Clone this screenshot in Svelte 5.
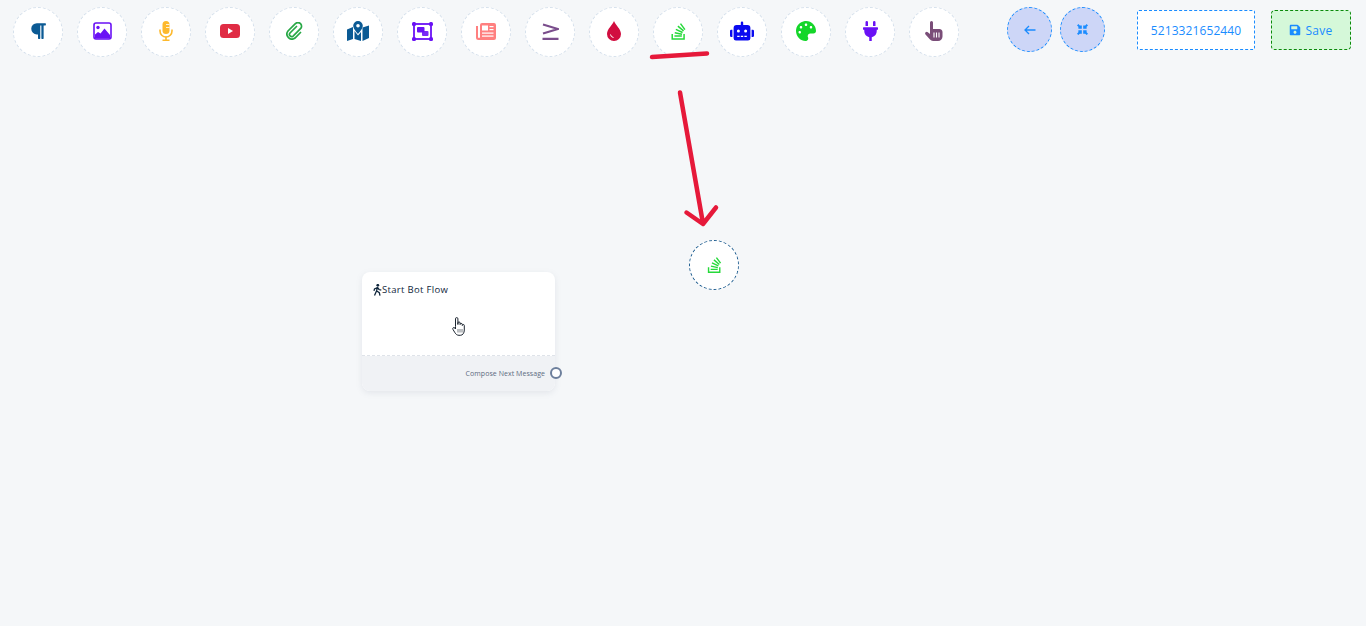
<script>
  const stack = "M290.7 311L95 269.7 86.8 309l195.7 41zm51-87L188.2 95.7l-25.5 30.8 153.5 127.9zm-31.2 39.7L129.2 179l-16.7 36.5L293.7 300zM262 32l-32 24 119.3 160.3 32-24zm20.5 328h-200v39.7h200zm39.7 80H42.7V320h-40v160h359.5V320h-40z";
</script>

<div class="page">
  <header class="toolbar">
    <button class="tool" aria-label="Text">
      <svg width="16" height="18" viewBox="0 0 448 512"><path fill="#0b5a94" d="M448 48v32a16 16 0 0 1-16 16h-48v368a16 16 0 0 1-16 16h-32a16 16 0 0 1-16-16V96h-32v368a16 16 0 0 1-16 16h-32a16 16 0 0 1-16-16V352h-32a160 160 0 0 1 0-320h240a16 16 0 0 1 16 16z"/></svg>
    </button>
    <button class="tool" aria-label="Image">
      <svg width="19" height="18" viewBox="0 0 19 18"><rect x="1" y="1" width="17" height="16" rx="2" fill="#fff" stroke="#6a11f5" stroke-width="1.6"/><circle cx="5" cy="5.500" r="1.700" fill="#6a11f5"/><path fill="#6a11f5" d="M2 16.500v-4l3-2.500 2.500 1.500 4-5 5.500 6.500v3.500z"/></svg>
    </button>
    <button class="tool" aria-label="Audio">
      <svg width="14" height="20" viewBox="0 0 14 20"><rect x="3.500" y="0" width="7" height="13" rx="3.500" fill="#fdb92d"/><path d="M1 8.500v1.500a6 6 0 0 0 12 0V8.500" fill="none" stroke="#fdb92d" stroke-width="1.600"/><path d="M7 15.500V19M3.500 19.300h7" stroke="#fdb92d" stroke-width="1.600"/><path d="M7 3.500h3.500M7 6.500h3.500" stroke="#fff" stroke-width=".8"/></svg>
    </button>
    <button class="tool" aria-label="Video">
      <svg width="20" height="14" viewBox="0 0 20 14"><rect width="20" height="14" rx="3.500" fill="#e02c44"/><path d="M8 4l5 3-5 3z" fill="#fff"/></svg>
    </button>
    <button class="tool" aria-label="Attachment">
      <svg width="17" height="18" viewBox="0 0 17 18"><path d="M10.500 4.500L4 11a2.200 2.200 0 0 0 3.100 3.100l7.400-7.400a3.600 3.600 0 0 0-5.100-5.100L2 9a5 5 0 0 0 7 7l5.500-5.500" fill="none" stroke="#27a845" stroke-width="1.700" stroke-linecap="round"/></svg>
    </button>
    <button class="tool" aria-label="Map">
      <svg width="22" height="20" viewBox="0 0 22 20"><path fill="#0b5a94" d="M0 8.500l6-2.500v12l-6 2zM7.500 10v8l6.500 2v-9l-3 3.500zM15.500 6.500l6.500-2v12.500l-6.500 3z"/><path fill="#0b5a94" fill-rule="evenodd" d="M11 0a4.800 4.800 0 0 1 4.800 4.800C15.800 8 11 13 11 13S6.200 8 6.200 4.800A4.800 4.800 0 0 1 11 0zm0 3a1.800 1.800 0 1 0 0 3.600A1.800 1.800 0 0 0 11 3z"/></svg>
    </button>
    <button class="tool" aria-label="Shape">
      <svg width="21" height="19" viewBox="0 0 21 19"><rect x="2" y="2" width="17" height="15" fill="none" stroke="#6a11f5" stroke-width="1.800"/><g fill="#6a11f5"><rect width="4" height="4" rx="1.500"/><rect x="17" width="4" height="4" rx="1.500"/><rect y="15" width="4" height="4" rx="1.500"/><rect x="17" y="15" width="4" height="4" rx="1.500"/><rect x="5" y="5" width="7.500" height="5.500" rx="1"/><rect x="10" y="9" width="6.500" height="5" rx="1" opacity=".9"/></g></svg>
    </button>
    <button class="tool" aria-label="News">
      <svg width="20" height="17" viewBox="0 0 20 17"><path fill="#ff8080" d="M0 3h2v11a1 1 0 0 0 2 0V2a2 2 0 0 1 2-2h12a2 2 0 0 1 2 2v13a2 2 0 0 1-2 2H2.500A2.500 2.500 0 0 1 0 14.500z"/><g fill="#fff"><rect x="6" y="2.500" width="6" height="5"/><rect x="13.500" y="3" width="4" height="1.200"/><rect x="13.500" y="6" width="4" height="1.200"/><rect x="6" y="9.500" width="11.500" height="1.200"/><rect x="6" y="12.500" width="11.500" height="1.200"/></g></svg>
    </button>
    <button class="tool" aria-label="Greater or equal">
      <svg width="17" height="17" viewBox="0 0 17 17"><path d="M1 1.500l15 4.500-15 4.500M.5 15.800h16" fill="none" stroke="#7a4d8c" stroke-width="2.200"/></svg>
    </button>
    <button class="tool" aria-label="Drop">
      <svg width="14" height="20" viewBox="0 0 14 20"><path fill="#d10d3f" d="M7 0c1 3.500 7 8 7 13a7 7 0 0 1-14 0C0 8 6 3.500 7 0z"/><path d="M3.500 13.500a3.500 3.500 0 0 0 3 3" fill="none" stroke="#fff" stroke-width="1"/></svg>
    </button>
    <button class="tool" aria-label="Stack">
      <svg width="15" height="19" viewBox="0 0 384 512"><path fill="#26d93a" d={stack}/></svg>
    </button>
    <button class="tool" aria-label="Bot">
      <svg width="24" height="20" viewBox="0 0 640 512"><path fill="#0a0af0" d="M32,224H64V416H32A31.96166,31.96166,0,0,1,0,384V256A31.96166,31.96166,0,0,1,32,224Zm512-48V448a64.06328,64.06328,0,0,1-64,64H160a64.06328,64.06328,0,0,1-64-64V176a79.974,79.974,0,0,1,80-80H288V32a32,32,0,0,1,64,0V96H464A79.974,79.974,0,0,1,544,176ZM264,256a40,40,0,1,0-40,40A39.997,39.997,0,0,0,264,256Zm-8,128H192v32h64Zm96,0H288v32h64ZM456,256a40,40,0,1,0-40,40A39.997,39.997,0,0,0,456,256Zm-8,128H384v32h64ZM640,256V384a31.96166,31.96166,0,0,1-32,32H576V224h32A31.96166,31.96166,0,0,1,640,256Z"/></svg>
    </button>
    <button class="tool" aria-label="Palette">
      <svg width="20" height="20" viewBox="0 0 512 512"><path fill="#14d629" d="M204.3 5C104.9 24.4 24.8 104.3 5.2 203.4c-37 187 131.7 326.4 258.8 306.7 41.2-6.4 61.4-54.6 42.5-91.7-23.1-45.4 9.9-98.4 60.9-98.4h79.7c35.8 0 64.8-29.6 64.9-65.3C511.5 97.1 368.1-26.9 204.3 5zM96 320c-17.7 0-32-14.3-32-32s14.3-32 32-32 32 14.3 32 32-14.3 32-32 32zm32-128c-17.7 0-32-14.3-32-32s14.3-32 32-32 32 14.3 32 32-14.3 32-32 32zm128-64c-17.7 0-32-14.3-32-32s14.3-32 32-32 32 14.3 32 32-14.3 32-32 32zm128 64c-17.7 0-32-14.3-32-32s14.3-32 32-32 32 14.3 32 32-14.3 32-32 32z"/></svg>
    </button>
    <button class="tool" aria-label="Plug">
      <svg width="15" height="20" viewBox="0 0 384 512"><path fill="#6a11f5" d="M320,32a32,32,0,0,0-64,0v96h64Zm48,128H16A16,16,0,0,0,0,176v32a16,16,0,0,0,16,16H32v32A160.07,160.07,0,0,0,160,412.8V512h64V412.8A160.07,160.07,0,0,0,352,256V224h16a16,16,0,0,0,16-16V176A16,16,0,0,0,368,160ZM128,32a32,32,0,0,0-64,0v96h64Z"/></svg>
    </button>
    <button class="tool" aria-label="Pointer">
      <svg width="18" height="20" viewBox="0 0 18 20"><path fill="#7a4d78" d="M5 1.500a1.500 1.500 0 0 1 3 0V8h6a3 3 0 0 1 3.500 3v4.500a4.500 4.500 0 0 1-4.500 4.500H8a4 4 0 0 1-3-1.500L.5 13.500a1.600 1.600 0 0 1 2.300-2.200L5 13z"/><path d="M9 11.500v5M11.500 11.500v5M14 11.500v5" stroke="#fff" stroke-width="1.100"/></svg>
    </button>

    <div class="round-group">
      <button class="round" aria-label="Back">
        <svg width="12" height="10" viewBox="0 0 12 10"><path d="M11.500 5H1M5 1L1 5l4 4" fill="none" stroke="#1a8cff" stroke-width="1.300"/></svg>
      </button>
      <button class="round" aria-label="Collapse">
        <svg width="11" height="11" viewBox="0 0 16 16"><path fill="#1a8cff" d="M0 2L2 0L4 2H7V7H2V4zM16 2L14 0L12 2H9V7H14V4zM0 14L2 16L4 14H7V9H2V12zM16 14L14 16L12 14H9V9H14V12z"/></svg>
      </button>
    </div>

    <div class="phone">5213321652440</div>
    <button class="save">
      <svg width="12" height="12" viewBox="0 0 448 512"><path fill="#1a8cff" d="M433.941 129.941l-83.882-83.882A48 48 0 0 0 316.118 32H48C21.49 32 0 53.49 0 80v352c0 26.51 21.49 48 48 48h352c26.51 0 48-21.49 48-48V163.882a48 48 0 0 0-14.059-33.941zM224 416c-35.346 0-64-28.654-64-64 0-35.346 28.654-64 64-64s64 28.654 64 64c0 35.346-28.654 64-64 64zm96-304.52V212c0 6.627-5.373 12-12 12H76c-6.627 0-12-5.373-12-12V108c0-6.627 5.373-12 12-12h228.52c3.183 0 6.235 1.264 8.485 3.515l3.48 3.48A11.996 11.996 0 0 1 320 111.48z"/></svg>
      <span>Save</span>
    </button>
  </header>

  <svg class="marks" width="1366" height="626" aria-hidden="true">
    <path d="M652 57L707 53.500M680 92.500L703 223.500M686.500 212.500L703 224L716 207.500" fill="none" stroke="#e6193a" stroke-width="4.500" stroke-linecap="round" stroke-linejoin="round"/>
  </svg>

  <div class="dropped">
    <svg width="15" height="18" viewBox="0 0 384 512"><path fill="#26d93a" d={stack}/></svg>
  </div>

  <article class="node">
    <div class="node-body">
      <div class="node-title">
        <svg width="9" height="12" viewBox="0 0 9 12"><circle cx="4.800" cy="1.300" r="1.400" fill="#10263c"/><path d="M4.500 3.200L3.500 7 1.500 11.500M3.800 7l2.500 1.700.7 3M4.500 3.500L1.500 5 1 6.800M4.500 3.500L6 5.500l2.300.7" fill="none" stroke="#10263c" stroke-width="1.300"/></svg>
        <span>Start Bot Flow</span>
      </div>
      <svg class="cursor" width="14" height="19" viewBox="0 0 14 19"><path d="M3.500 9.500V1.800a1.200 1.200 0 0 1 2.400 0V7.500V6a1.100 1.100 0 0 1 2.200 0v1.500a1.100 1.100 0 0 1 2.200 0v1a1 1 0 0 1 2 0V13c0 3-1.500 5.300-4 5.300H7c-2 0-3-1-4-2.500L1 12.500c-1-1.700 1-2.700 2-1.300l.5 .8z" fill="#fff" stroke="#1c2530" stroke-width="1"/><path d="M6 12v3.500M8 12v3.500M10 12v3.500" stroke="#1c2530" stroke-width=".6"/></svg>
    </div>
    <div class="node-foot">
      <span>Compose Next Message</span>
      <i class="port"></i>
    </div>
  </article>
</div>

<style>
  :global(body) {
    margin: 0;
    background: #f5f7f9;
    font-family: "Open Sans", "Noto Sans", sans-serif;
  }
  .page {
    position: relative;
    width: 1366px;
    height: 626px;
    overflow: hidden;
    background: #f5f7f9;
  }
  .toolbar {
    display: flex;
    align-items: flex-start;
    gap: 14px;
    padding: 7px 0 0 13px;
  }
  button {
    padding: 0;
    font: inherit;
    cursor: pointer;
  }
  .tool {
    flex: none;
    display: flex;
    align-items: center;
    justify-content: center;
    width: 50px;
    height: 50px;
    box-sizing: border-box;
    border: 1px dashed #d5e0ec;
    border-radius: 50%;
    background: #fff;
    padding-bottom: 2px;
  }
  .round-group {
    display: flex;
    gap: 8px;
    margin-left: 34px;
  }
  .round {
    display: flex;
    align-items: center;
    justify-content: center;
    width: 45px;
    height: 45px;
    box-sizing: border-box;
    border: 1px dashed #1a8cff;
    border-radius: 50%;
    background: #cdd6f7;
  }
  .phone {
    display: flex;
    align-items: center;
    justify-content: center;
    margin: 3px 0 0 18px;
    width: 118px;
    height: 40px;
    box-sizing: border-box;
    border: 1px dashed #1a8cff;
    border-radius: 2px;
    background: #fff;
    color: #1a8cff;
    font-size: 12px;
    letter-spacing: .1px;
  }
  .save {
    display: flex;
    align-items: center;
    justify-content: center;
    gap: 4px;
    margin: 3px 0 0 2px;
    width: 80px;
    height: 40px;
    box-sizing: border-box;
    border: 1px dashed #0a8a0a;
    border-radius: 4px;
    background: #d5f8d9;
    color: #1a8cff;
    font-size: 12px;
    letter-spacing: .3px;
  }
  .marks {
    position: absolute;
    inset: 0;
    pointer-events: none;
  }
  .dropped {
    position: absolute;
    left: 689px;
    top: 240px;
    display: flex;
    align-items: center;
    justify-content: center;
    width: 50px;
    height: 50px;
    box-sizing: border-box;
    border: 1px dashed #1a5a8e;
    border-radius: 50%;
    background: #fff;
  }
  .node {
    position: absolute;
    left: 362px;
    top: 272px;
    width: 193px;
    height: 119px;
    border-radius: 8px;
    background: #fff;
    box-shadow: 0 2px 6px rgba(120, 130, 150, .14);
  }
  .node-body {
    display: flex;
    flex-direction: column;
    height: 84px;
    box-sizing: border-box;
    padding: 11px 0 0 11px;
    border-bottom: 1px dashed #dfe3e9;
  }
  .node-title {
    display: flex;
    align-items: center;
    gap: 0;
    color: #10263c;
    font-size: 9.500px;
    font-weight: 500;
    line-height: 14px;
    letter-spacing: .33px;
  }
  .cursor {
    align-self: center;
    margin: 20px 11px 0 0;
  }
  .node-foot {
    position: relative;
    display: flex;
    align-items: center;
    justify-content: flex-end;
    height: 35px;
    box-sizing: border-box;
    padding: 0 10px 0 0;
    border-radius: 0 0 8px 8px;
    background: #f0f2f5;
    color: #5c6b80;
    font-size: 7px;
    letter-spacing: .05px;
  }
  .port {
    position: absolute;
    right: -7px;
    top: 11px;
    width: 12px;
    height: 12px;
    box-sizing: border-box;
    border: 2px solid #6d7f9c;
    border-radius: 50%;
    background: #fff;
  }
</style>
